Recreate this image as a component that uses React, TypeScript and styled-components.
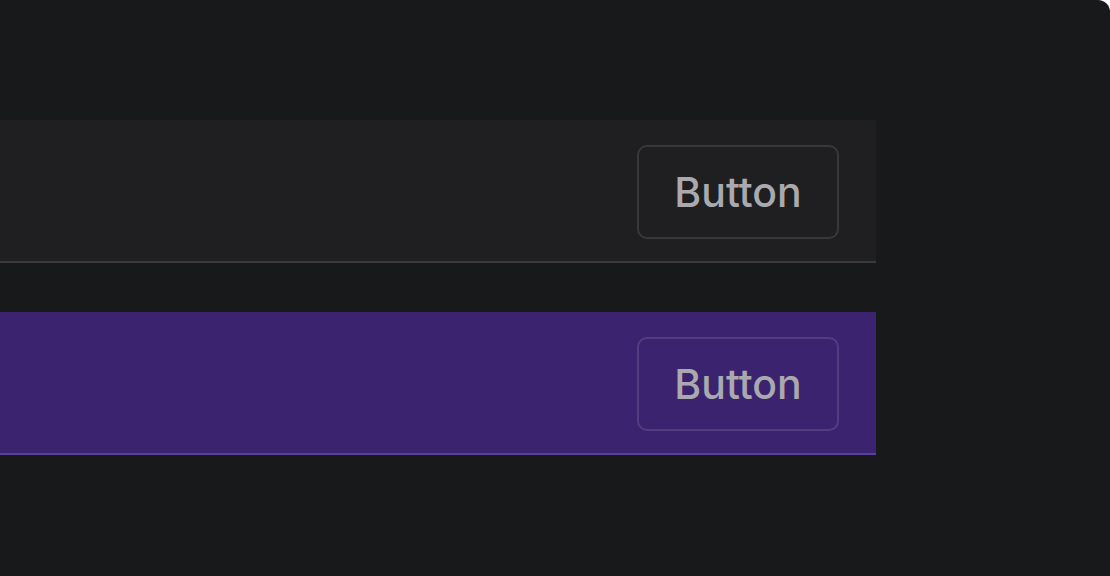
import React from 'react';
import styled, { createGlobalStyle } from 'styled-components';

const GlobalStyle = createGlobalStyle`
  html, body {
    margin: 0;
    background: #ffffff;
    font-family: Inter, "Noto Sans", sans-serif;
  }
`;

const Frame = styled.div`
  width: 1110px;
  height: 576px;
  background: #18191b;
  border-top-right-radius: 12px;
  padding-top: 120px;
  box-sizing: border-box;
  display: flex;
  flex-direction: column;
  gap: 49px;
  overflow: hidden;
`;

const Bar = styled.div<{ tone: 'neutral' | 'accent' }>`
  width: 876px;
  height: 143px;
  box-sizing: border-box;
  display: flex;
  justify-content: flex-end;
  align-items: flex-start;
  padding: 25px 37px 0 0;
  background: ${({ tone }) => (tone === 'accent' ? '#3c2370' : '#1f1f21')};
  border-bottom: 2px solid ${({ tone }) => (tone === 'accent' ? '#59419a' : '#3a3a3c')};
`;

const Button = styled.button<{ tone: 'neutral' | 'accent' }>`
  width: 202px;
  height: 94px;
  padding: 0;
  box-sizing: border-box;
  border-radius: 10px;
  background: transparent;
  border: 2px solid ${({ tone }) => (tone === 'accent' ? 'rgba(255,255,255,0.12)' : '#38383b')};
  color: #a9a9ae;
  font-family: Inter, sans-serif;
  font-size: 41px;
  font-weight: 500;
  line-height: 1;
  cursor: pointer;
`;

export default function App() {
  return (
    <>
      <GlobalStyle />
      <Frame>
        <Bar tone="neutral">
          <Button tone="neutral">Button</Button>
        </Bar>
        <Bar tone="accent">
          <Button tone="accent">Button</Button>
        </Bar>
      </Frame>
    </>
  );
}
